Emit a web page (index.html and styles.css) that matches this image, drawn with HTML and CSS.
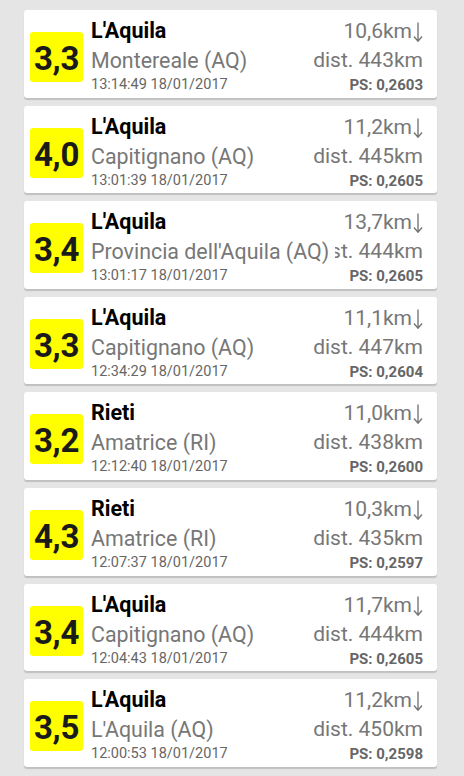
FILE: index.html
```html
<!DOCTYPE html>
<html lang="it">
<head>
<meta charset="utf-8">
<title>Terremoti</title>
<link rel="stylesheet" href="styles.css">
</head>
<body>
<main class="list">
  <article class="card">
    <div class="mag">3,3</div>
    <div class="info">
      <div class="title">L'Aquila</div><div class="depth">10,6km<svg class="arrow" viewBox="0 0 10 20" width="10" height="20"><path d="M5 0.5V19.2M1 14.5L5 19.2L9 14.5"/></svg></div>
      <div class="row2"><div class="dist">dist. 443km</div><div class="place">Montereale (AQ)</div></div>
      <div class="date">13:14:49 18/01/2017</div><div class="ps">PS: 0,2603</div>
    </div>
  </article>
  <article class="card">
    <div class="mag">4,0</div>
    <div class="info">
      <div class="title">L'Aquila</div><div class="depth">11,2km<svg class="arrow" viewBox="0 0 10 20" width="10" height="20"><path d="M5 0.5V19.2M1 14.5L5 19.2L9 14.5"/></svg></div>
      <div class="row2"><div class="dist">dist. 445km</div><div class="place">Capitignano (AQ)</div></div>
      <div class="date">13:01:39 18/01/2017</div><div class="ps">PS: 0,2605</div>
    </div>
  </article>
  <article class="card">
    <div class="mag">3,4</div>
    <div class="info">
      <div class="title">L'Aquila</div><div class="depth">13,7km<svg class="arrow" viewBox="0 0 10 20" width="10" height="20"><path d="M5 0.5V19.2M1 14.5L5 19.2L9 14.5"/></svg></div>
      <div class="row2"><div class="dist">dist. 444km</div><div class="place">Provincia dell'Aquila (AQ)</div></div>
      <div class="date">13:01:17 18/01/2017</div><div class="ps">PS: 0,2605</div>
    </div>
  </article>
  <article class="card">
    <div class="mag">3,3</div>
    <div class="info">
      <div class="title">L'Aquila</div><div class="depth">11,1km<svg class="arrow" viewBox="0 0 10 20" width="10" height="20"><path d="M5 0.5V19.2M1 14.5L5 19.2L9 14.5"/></svg></div>
      <div class="row2"><div class="dist">dist. 447km</div><div class="place">Capitignano (AQ)</div></div>
      <div class="date">12:34:29 18/01/2017</div><div class="ps">PS: 0,2604</div>
    </div>
  </article>
  <article class="card">
    <div class="mag">3,2</div>
    <div class="info">
      <div class="title">Rieti</div><div class="depth">11,0km<svg class="arrow" viewBox="0 0 10 20" width="10" height="20"><path d="M5 0.5V19.2M1 14.5L5 19.2L9 14.5"/></svg></div>
      <div class="row2"><div class="dist">dist. 438km</div><div class="place">Amatrice (RI)</div></div>
      <div class="date">12:12:40 18/01/2017</div><div class="ps">PS: 0,2600</div>
    </div>
  </article>
  <article class="card">
    <div class="mag">4,3</div>
    <div class="info">
      <div class="title">Rieti</div><div class="depth">10,3km<svg class="arrow" viewBox="0 0 10 20" width="10" height="20"><path d="M5 0.5V19.2M1 14.5L5 19.2L9 14.5"/></svg></div>
      <div class="row2"><div class="dist">dist. 435km</div><div class="place">Amatrice (RI)</div></div>
      <div class="date">12:07:37 18/01/2017</div><div class="ps">PS: 0,2597</div>
    </div>
  </article>
  <article class="card">
    <div class="mag">3,4</div>
    <div class="info">
      <div class="title">L'Aquila</div><div class="depth">11,7km<svg class="arrow" viewBox="0 0 10 20" width="10" height="20"><path d="M5 0.5V19.2M1 14.5L5 19.2L9 14.5"/></svg></div>
      <div class="row2"><div class="dist">dist. 444km</div><div class="place">Capitignano (AQ)</div></div>
      <div class="date">12:04:43 18/01/2017</div><div class="ps">PS: 0,2605</div>
    </div>
  </article>
  <article class="card">
    <div class="mag">3,5</div>
    <div class="info">
      <div class="title">L'Aquila</div><div class="depth">11,2km<svg class="arrow" viewBox="0 0 10 20" width="10" height="20"><path d="M5 0.5V19.2M1 14.5L5 19.2L9 14.5"/></svg></div>
      <div class="row2"><div class="dist">dist. 450km</div><div class="place">L'Aquila (AQ)</div></div>
      <div class="date">12:00:53 18/01/2017</div><div class="ps">PS: 0,2598</div>
    </div>
  </article>
</main>
</body>
</html>
```
FILE: styles.css
```css
html, body {
  margin: 0;
  padding: 0;
  background: #e5e5e5;
}
body {
  font-family: Roboto, "DejaVu Sans", sans-serif;
  width: 464px;
  height: 776px;
  overflow: hidden;
}
.list {
  display: flex;
  flex-direction: column;
  gap: 8px;
  padding: 10px 0 0 24px;
}
.card {
  width: 413px;
  box-sizing: border-box;
  height: 87.6px;
  background: #fff;
  border-radius: 3px;
  box-shadow: 0 2px 1px rgba(0, 0, 0, 0.16);
  display: flex;
  align-items: center;
  padding: 7px 14px 3.6px 6px;
  gap: 8px;
}
.mag {
  flex: 0 0 53px;
  height: 50px;
  margin-top: 3px;
  background: #ffff00;
  border-radius: 3px;
  display: flex;
  align-items: center;
  justify-content: center;
  padding-top: 3px;
  box-sizing: border-box;
  font-size: 33px;
  font-weight: 700;
  color: #1a1a1a;
  letter-spacing: -0.3px;
}
.info {
  flex: 1;
  min-width: 0;
  align-self: stretch;
  display: grid;
  grid-template-columns: 1fr auto;
  grid-template-rows: 28px 31px 18px;
  white-space: nowrap;
}
.title {
  font-size: 21.5px;
  line-height: 28px;
  font-weight: 700;
  color: #000;
}
.depth {
  font-size: 21px;
  line-height: 28px;
  color: #777;
  text-align: right;
}
.arrow {
  vertical-align: -4px;
  margin-left: 1px;
  fill: none;
  stroke: #777;
  stroke-width: 1.4;
}
.row2 {
  grid-column: 1 / 3;
  display: grid;
  font-size: 21px;
  line-height: 31px;
  color: #777;
}
.dist {
  grid-area: 1 / 1;
  justify-self: end;
}
.place {
  grid-area: 1 / 1;
  justify-self: start;
  background: #fff;
  padding-right: 6px;
  font-size: 21.4px;
}
.date {
  font-size: 14.5px;
  line-height: 18px;
  color: #666;
}
.ps {
  font-size: 15px;
  line-height: 18px;
  font-weight: 700;
  color: #666;
  text-align: right;
}
```
